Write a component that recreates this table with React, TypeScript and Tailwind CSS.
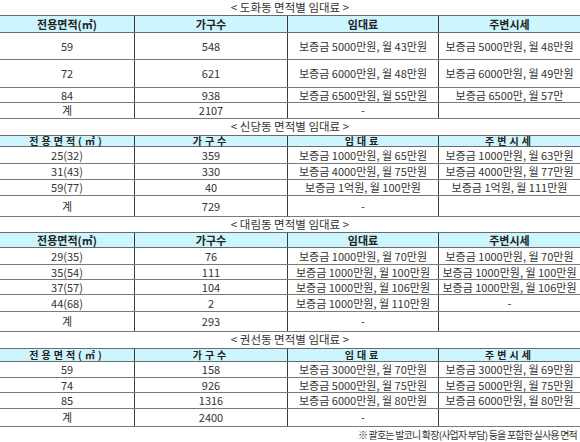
import React from "react";

type Row = { cells: string[]; h: string };
type Section = {
  title: string;
  spaced: boolean;
  titleH: string;
  headH: string;
  rows: Row[];
};

// row heights are kept as full class names so Tailwind can pick them up
const sections: Section[] = [
  {
    title: "< 도화동 면적별 임대료 >",
    spaced: false,
    titleH: "h-[15px]",
    headH: "h-[18px]",
    rows: [
      { cells: ["59", "548", "보증금 5000만원, 월 43만원", "보증금 5000만원, 월 48만원"], h: "h-[27px]" },
      { cells: ["72", "621", "보증금 6000만원, 월 48만원", "보증금 6000만원, 월 49만원"], h: "h-[28px]" },
      { cells: ["84", "938", "보증금 6500만원, 월 55만원", "보증금 6500만, 월 57만"], h: "h-[15px]" },
      { cells: ["계", "2107", "-", ""], h: "h-[16px]" },
    ],
  },
  {
    title: "< 신당동 면적별 임대료 >",
    spaced: true,
    titleH: "h-[16px]",
    headH: "h-[12px]",
    rows: [
      { cells: ["25(32)", "359", "보증금 1000만원, 월 65만원", "보증금 1000만원, 월 63만원"], h: "h-[17px]" },
      { cells: ["31(43)", "330", "보증금 4000만원, 월 75만원", "보증금 4000만원, 월 77만원"], h: "h-[16px]" },
      { cells: ["59(77)", "40", "보증금 1억원, 월 100만원", "보증금 1억원, 월 111만원"], h: "h-[16px]" },
      { cells: ["계", "729", "-", ""], h: "h-[21px]" },
    ],
  },
  {
    title: "< 대림동 면적별 임대료 >",
    spaced: false,
    titleH: "h-[15px]",
    headH: "h-[16px]",
    rows: [
      { cells: ["29(35)", "76", "보증금 1000만원, 월 70만원", "보증금 1000만원, 월 70만원"], h: "h-[17px]" },
      { cells: ["35(54)", "111", "보증금 1000만원, 월 100만원", "보증금 1000만원, 월 100만원"], h: "h-[15px]" },
      { cells: ["37(57)", "104", "보증금 1000만원, 월 106만원", "보증금 1000만원, 월 106만원"], h: "h-[15px]" },
      { cells: ["44(68)", "2", "보증금 1000만원, 월 110만원", "-"], h: "h-[17px]" },
      { cells: ["계", "293", "-", ""], h: "h-[20px]" },
    ],
  },
  {
    title: "< 권선동 면적별 임대료 >",
    spaced: true,
    titleH: "h-[16px]",
    headH: "h-[14px]",
    rows: [
      { cells: ["59", "158", "보증금 3000만원, 월 70만원", "보증금 3000만원, 월 69만원"], h: "h-[16px]" },
      { cells: ["74", "926", "보증금 5000만원, 월 75만원", "보증금 5000만원, 월 75만원"], h: "h-[15px]" },
      { cells: ["85", "1316", "보증금 6000만원, 월 80만원", "보증금 6000만원, 월 80만원"], h: "h-[16px]" },
      { cells: ["계", "2400", "-", ""], h: "h-[18px]" },
    ],
  },
];

const head = ["전용면적(㎡)", "가구수", "임대료", "주변시세"];

const cols = "grid grid-cols-[134px_153px_151px_142px]";

function Cell({ children, first }: { children: React.ReactNode; first?: boolean }) {
  return (
    <div
      className={`flex items-center justify-center whitespace-nowrap ${
        first ? "" : "border-l border-[#3a3a3a]"
      }`}
    >
      {children}
    </div>
  );
}

function RentTable({ s }: { s: Section }) {
  return (
    <div>
      <div className={`flex items-center justify-center text-[11.5px] text-[#333] ${s.titleH}`}>
        {s.title}
      </div>
      <div
        className={`${cols} ${s.headH} box-border border-y border-[#6b6b6b] bg-[#cdf5fd] font-bold text-[#222] ${
          s.spaced ? "text-[10px] tracking-[3px]" : "text-[11px]"
        }`}
      >
        {head.map((h, i) => (
          <Cell key={i} first={i === 0}>
            {h}
          </Cell>
        ))}
      </div>
      {s.rows.map((r, ri) => (
        <div
          key={ri}
          className={`${cols} ${r.h} box-border border-b border-[#7a7a7a] text-[11px] text-[#333]`}
        >
          {r.cells.map((c, ci) => (
            <Cell key={ci} first={ci === 0}>
              {c}
            </Cell>
          ))}
        </div>
      ))}
    </div>
  );
}

export default function App() {
  return (
    <div className="w-[580px] h-[442px] overflow-hidden bg-white leading-none font-['Noto_Sans_CJK_KR','Noto_Sans',sans-serif]">
      {sections.map((s, i) => (
        <RentTable key={i} s={s} />
      ))}
      <div className="flex h-[15px] items-center justify-end pr-[3px] text-[10px] tracking-[-0.8px] text-[#333]">
        ※ 괄호는 발코니 확장(사업자 부담) 등을 포함한 실사용 면적
      </div>
    </div>
  );
}
